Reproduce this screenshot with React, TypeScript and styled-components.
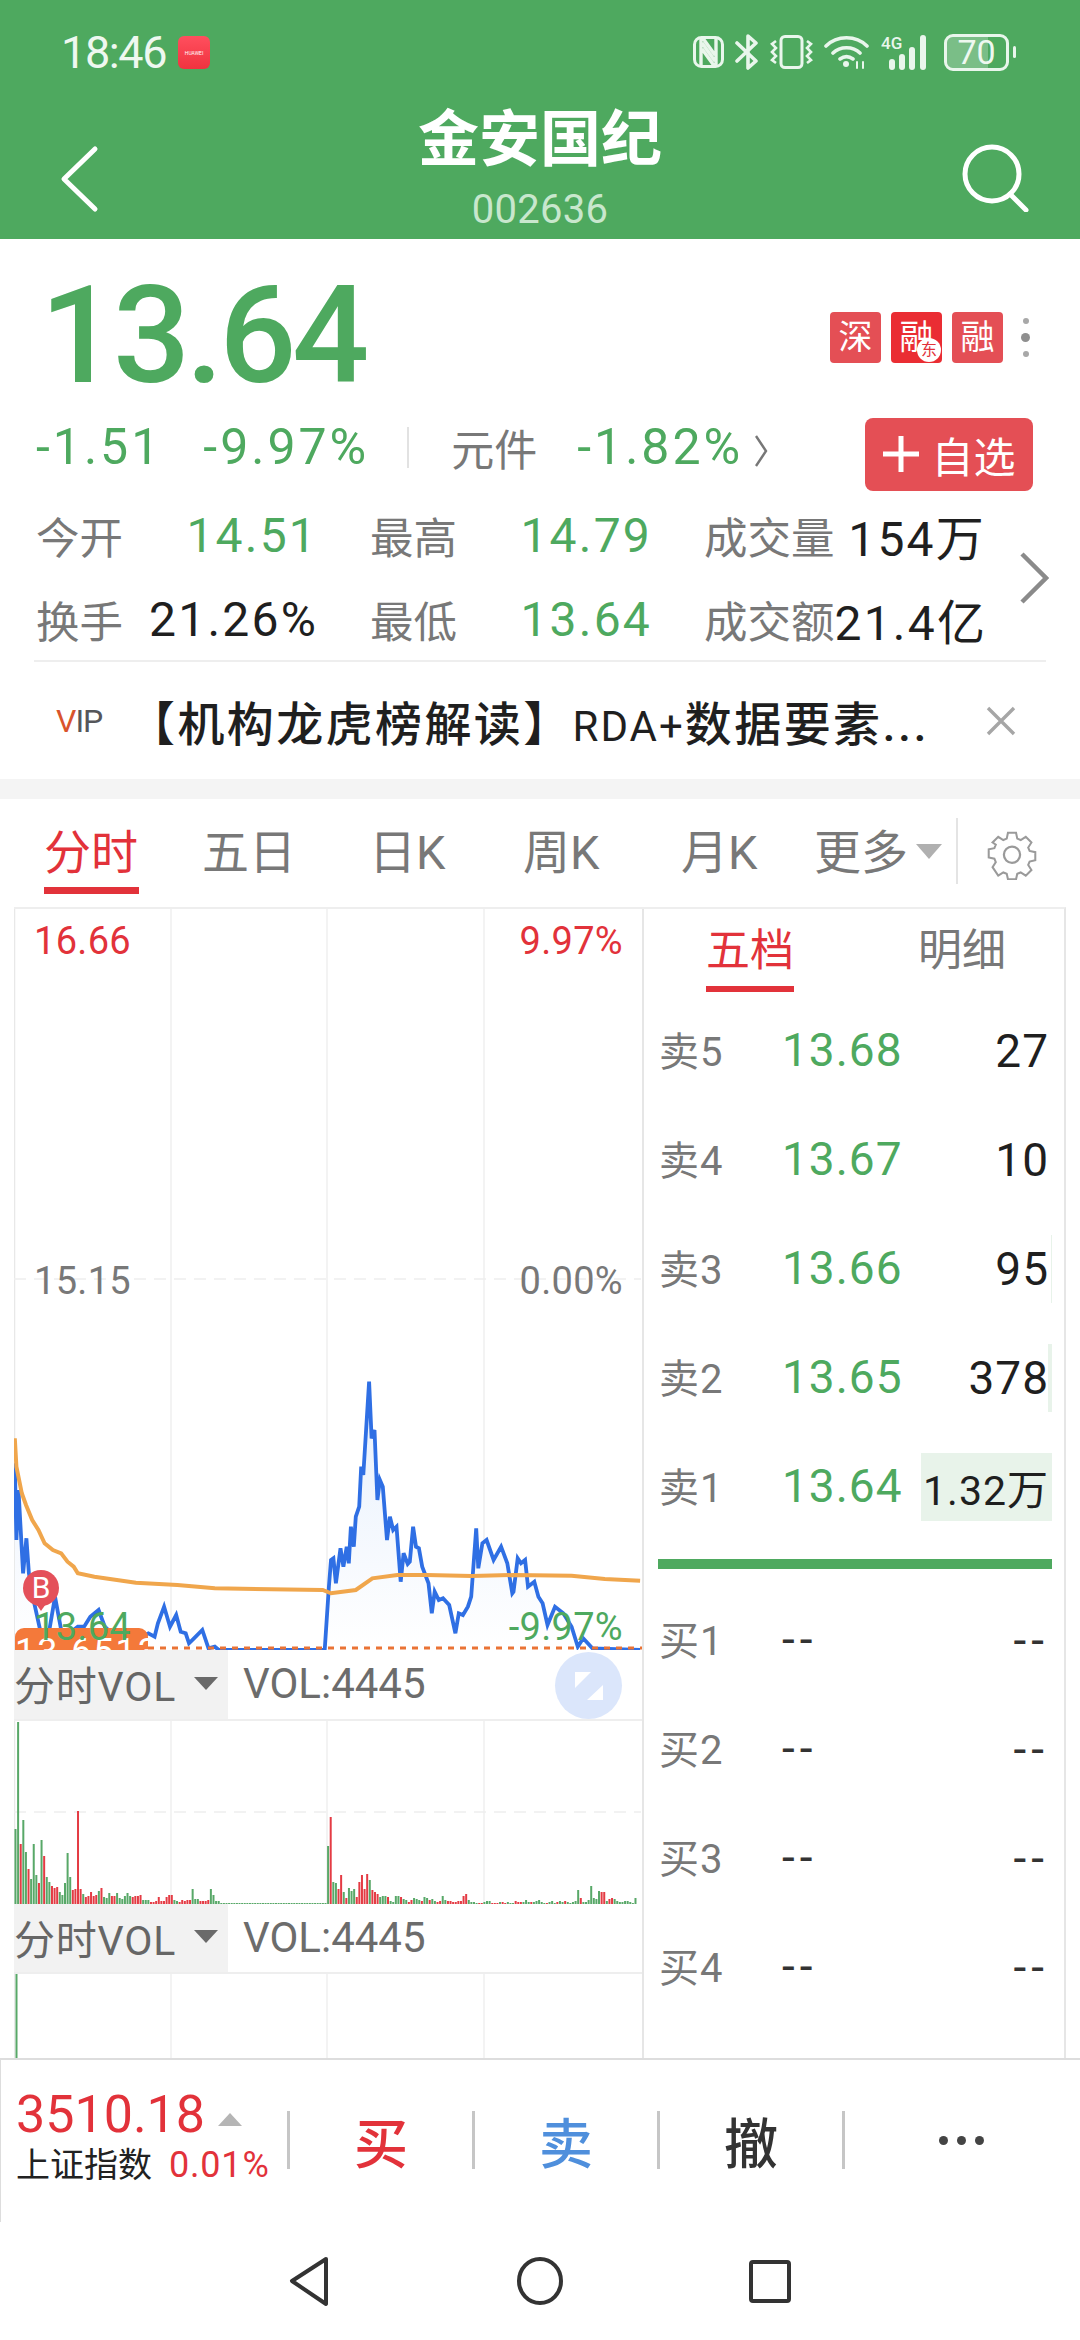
import React from "react"
import styled, { createGlobalStyle } from "styled-components"

const GREEN = "#4ea95f"
const RED = "#e2323a"
const GRAY = "#787878"
const INK = "#1f1f1f"
const CJK = `Roboto, "Noto Sans CJK SC", sans-serif`

const GlobalStyle = createGlobalStyle`
  html, body {
    margin: 0;
    padding: 0;
    background: #fff;
  }
  body {
    font-family: ${CJK};
  }
`

const Page = styled.div`
  width: 1080px;
  height: 2340px;
  display: flex;
  flex-direction: column;
  overflow: hidden;
  background: #fff;
`

/* ---------- green header ---------- */

const Header = styled.header`
  height: 239px;
  flex: none;
  background: ${GREEN};
  color: #fff;
  position: relative;
  display: flex;
  flex-direction: column;
`

const StatusBar = styled.div`
  height: 104px;
  display: flex;
  align-items: center;
  justify-content: space-between;
  padding: 0 64px 0 61px;
`

const StatusLeft = styled.div`
  display: flex;
  align-items: center;
  gap: 12px;
`

const Clock = styled.span`
  font-size: 45px;
  color: #eef8f0;
  letter-spacing: -1.4px;
`

const StoreIcon = styled.div`
  width: 32px;
  height: 33px;
  border-radius: 6px;
  background: linear-gradient(#ff4f5e, #f0333f);
  color: #fff;
  font-size: 5px;
  text-align: center;
  line-height: 34px;
  overflow: hidden;
`

const StatusRight = styled.div`
  display: flex;
  align-items: center;
  gap: 11px;
`

const Battery = styled.div`
  width: 65px;
  height: 37px;
  box-sizing: border-box;
  border: 3px solid #e9f6ec;
  border-radius: 9px;
  position: relative;
  overflow: hidden;
  display: flex;
  align-items: center;
  justify-content: center;
  font-size: 34px;
  color: #eef8f0;
  margin-left: 2px;

  &::before {
    content: "";
    position: absolute;
    left: 0;
    top: 0;
    bottom: 0;
    width: 70%;
    background: rgba(255, 255, 255, 0.25);
  }
`

const BatteryText = styled.span`
  position: relative;
`

const BatteryNub = styled.div`
  width: 3px;
  height: 12px;
  border-radius: 2px;
  background: #e9f6ec;
  margin-left: -7px;
`

const TitleBar = styled.div`
  flex: 1;
  display: flex;
  align-items: flex-start;
  justify-content: space-between;
  padding: 0 50px 0 60px;
`

const TitleBlock = styled.div`
  display: flex;
  flex-direction: column;
  align-items: center;
  margin: -3px 0 0 18px;
`

const Title = styled.h1`
  margin: 0;
  font-size: 61px;
  line-height: 78px;
  font-weight: 700;
`

const Code = styled.div`
  font-size: 40px;
  line-height: 44px;
  letter-spacing: 0.3px;
  color: #c8e7cd;
  margin-top: 9px;
`

const BackIcon = styled.svg`
  width: 40px;
  height: 68px;
  margin-top: 41px;
`

const SearchIcon = styled.svg`
  width: 68px;
  height: 68px;
  margin-top: 40px;
`

/* ---------- quote ---------- */

const PriceRow = styled.div`
  height: 170px;
  flex: none;
  display: flex;
  align-items: center;
  justify-content: space-between;
  padding: 24px 50px 0 40px;
  box-sizing: border-box;
`

const BigPrice = styled.div`
  font-size: 136px;
  font-weight: 500;
  line-height: 1;
  color: ${GREEN};
  letter-spacing: -4.4px;
`

const Badges = styled.div`
  display: flex;
  align-items: center;
  gap: 10px;
  margin-top: 2px;
`

const Badge = styled.div<{ $strong?: boolean }>`
  width: 51px;
  height: 51px;
  border-radius: 4px;
  background: ${(p) => (p.$strong ? "#ea2d33" : "#e44f55")};
  color: #fff;
  font-size: 34px;
  line-height: 50px;
  text-align: center;
  position: relative;
`

const BadgeDot = styled.span`
  position: absolute;
  right: 1px;
  bottom: 1px;
  width: 24px;
  height: 24px;
  border-radius: 50%;
  background: #fff;
  color: #e2323a;
  font-size: 16px;
  line-height: 24px;
`

const MoreDots = styled.div`
  display: flex;
  flex-direction: column;
  align-items: center;
  gap: 9px;
  margin-left: 8px;
`

const Dot = styled.span<{ $big?: boolean }>`
  width: ${(p) => (p.$big ? 9 : 6)}px;
  height: ${(p) => (p.$big ? 9 : 6)}px;
  border-radius: 50%;
  background: ${(p) => (p.$big ? "#8f8f8f" : "#a8a8a8")};
`

const ChangeRow = styled.div`
  height: 90px;
  flex: none;
  display: flex;
  align-items: center;
  padding: 0 47px 14px 36px;
  box-sizing: border-box;
`

const ChangeValue = styled.span<{ $gap?: number }>`
  font-size: 50px;
  letter-spacing: 3px;
  color: ${GREEN};
  margin-left: ${(p) => p.$gap ?? 0}px;
`

const VLine = styled.span`
  width: 2px;
  height: 41px;
  background: #e2e2e2;
  margin: 0 42px 0 38px;
`

const Sector = styled.span`
  font-size: 43px;
  color: ${GRAY};
`

const MiniChevron = styled.svg`
  width: 14px;
  height: 34px;
  margin: 8px 0 0 11px;
`

const AddButton = styled.button`
  width: 168px;
  height: 73px;
  margin-left: auto;
  margin-top: 14px;
  border: none;
  border-radius: 8px;
  background: #e44f55;
  color: #fff;
  font-family: ${CJK};
  font-size: 42px;
  padding: 0;
  display: flex;
  align-items: center;
  justify-content: center;
  gap: 11px;
`

const StatsRow = styled.div`
  height: 163px;
  flex: none;
  margin: 0 34px;
  border-bottom: 2px solid #eeeeee;
  box-sizing: border-box;
  display: flex;
  justify-content: space-between;
  padding: 0 0 0 2px;
`

const StatsGrid = styled.div`
  display: grid;
  grid-template-columns: repeat(3, 282px);
  grid-auto-rows: 84px;
  column-gap: 52px;
  margin-top: -6px;
`

const Stat = styled.div`
  display: flex;
  align-items: center;
  justify-content: space-between;
`

const StatLabel = styled.span`
  font-size: 43.5px;
  color: ${GRAY};
  white-space: nowrap;
  flex: none;
`

const StatValue = styled.span<{ $green?: boolean }>`
  font-size: 48px;
  letter-spacing: 2.2px;
  white-space: nowrap;
  color: ${(p) => (p.$green ? GREEN : INK)};
`

const BigChevron = styled.svg`
  width: 30px;
  height: 52px;
  margin: 53px -3px 0 0;
`

const Notice = styled.div`
  height: 117px;
  flex: none;
  display: flex;
  align-items: center;
  padding: 0 64px 0 56px;
  box-sizing: border-box;
`

const VipMark = styled.span`
  font-size: 32px;
  width: 72px;
  flex: none;
  color: #55565a;
  letter-spacing: -1px;
`

const VipV = styled.span`
  color: #d9542c;
`

const NoticeText = styled.span`
  font-size: 47px;
  font-weight: 500;
  letter-spacing: 2.4px;
  color: ${INK};
  white-space: nowrap;
`

const NoticeLatin = styled.span`
  font-size: 42px;
  font-weight: 400;
  letter-spacing: 2px;
`

const CloseIcon = styled.svg`
  width: 30px;
  height: 30px;
  margin-left: auto;
`

const Band = styled.div`
  height: 20px;
  flex: none;
  background: #f4f4f4;
`

/* ---------- period tabs ---------- */

const PeriodTabs = styled.nav`
  height: 108px;
  flex: none;
  position: relative;
  display: flex;
  align-items: center;
  padding-left: 44px;
  box-sizing: border-box;
`

const PeriodTab = styled.span<{ $active?: boolean; $w: number }>`
  width: ${(p) => p.$w}px;
  flex: none;
  height: 87px;
  box-sizing: border-box;
  display: flex;
  align-items: center;
  font-size: 47px;
  margin-top: -5px;
  padding-bottom: 5px;
  white-space: nowrap;
  color: ${(p) => (p.$active ? RED : GRAY)};
  position: relative;

  &::after {
    content: "";
    display: ${(p) => (p.$active ? "block" : "none")};
    position: absolute;
    left: 0;
    bottom: 0;
    width: 95px;
    height: 7px;
    background: ${RED};
  }
`

const Caret = styled.span`
  width: 0;
  height: 0;
  border-left: 13px solid transparent;
  border-right: 13px solid transparent;
  border-top: 15px solid #b0b0b0;
  margin: -4px 0 0 10px;
`

const TabDivider = styled.span`
  width: 2px;
  height: 66px;
  background: #e4e4e4;
  margin: -4px 0 0 14px;
`

const GearIcon = styled.svg`
  width: 54px;
  height: 54px;
  margin-left: 27px;
`

/* ---------- chart ---------- */

const ChartArea = styled.section`
  height: 1151px;
  flex: none;
  margin: 0 14px;
  border-top: 2px solid #eeeeee;
  border-right: 2px solid #e6e6e6;
  box-sizing: border-box;
  display: flex;
  min-height: 0;
`

const ChartColumn = styled.div`
  width: 628px;
  flex: none;
  border-right: 2px solid #e6e6e6;
  display: flex;
  flex-direction: column;
`

const Plot = styled.div<{ $h: number }>`
  height: ${(p) => p.$h}px;
  flex: none;
  position: relative;
`

const PlotSvg = styled.svg`
  display: block;
  position: absolute;
  left: 0;
  top: 0;
  width: 100%;
  height: 100%;
`

const AxisLabel = styled.span<{ $top: number; $right?: boolean; $color: string }>`
  position: absolute;
  top: ${(p) => p.$top}px;
  ${(p) => (p.$right ? "right: 19px;" : "left: 20px;")}
  font-size: 38px;
  line-height: 40px;
  letter-spacing: 0.3px;
  color: ${(p) => p.$color};
`

const TagBox = styled.div`
  position: absolute;
  left: 1px;
  bottom: 0;
  width: 133px;
  height: 22px;
  border-radius: 9px 9px 0 0;
  background: #f4793a;
  overflow: hidden;
  color: #fff;
  font-size: 36px;
  line-height: 48px;
  text-align: center;
  letter-spacing: 2px;
`

const BuyPin = styled.div`
  position: absolute;
  left: 9px;
  top: 661px;
  width: 36px;
  height: 36px;
  border-radius: 50%;
  background: #e4505a;
  color: #fff;
  font-size: 30px;
  line-height: 36px;
  text-align: center;

  &::after {
    content: "";
    position: absolute;
    left: 11px;
    top: 31px;
    border-left: 7px solid transparent;
    border-right: 7px solid transparent;
    border-top: 10px solid #e4505a;
  }
`

const PanelHead = styled.div<{ $h: number }>`
  height: ${(p) => p.$h}px;
  flex: none;
  position: relative;
  display: flex;
  align-items: center;
  border-bottom: 2px solid #eeeeee;
  box-sizing: border-box;
`

const PanelSelect = styled.div`
  width: 214px;
  height: 100%;
  background: #f2f2f2;
  display: flex;
  align-items: center;
  padding-bottom: 3px;
  box-sizing: border-box;
  font-size: 41px;
  letter-spacing: 0.8px;
  color: #666666;
  white-space: nowrap;
`

const PanelCaret = styled.span`
  border-left: 12px solid transparent;
  border-right: 12px solid transparent;
  border-top: 13px solid #6a6a6a;
  margin-left: 18px;
`

const PanelValue = styled.span`
  font-size: 42px;
  color: #6c6c6c;
  margin: -2px 0 0 15px;
`

const ZoomButton = styled.div`
  position: absolute;
  right: 20px;
  top: 2px;
  width: 67px;
  height: 67px;
  border-radius: 50%;
  background: #dbe6fb;
  display: flex;
  align-items: center;
  justify-content: center;
`

/* ---------- order book ---------- */

const Book = styled.div`
  flex: 1;
  display: flex;
  flex-direction: column;
  padding: 0 12px 0 14px;
`

const BookTabs = styled.div`
  height: 83px;
  flex: none;
  display: flex;
  font-size: 44px;
  margin-bottom: 4px;
`

const BookTab = styled.span<{ $active?: boolean; $w: number }>`
  width: ${(p) => p.$w}px;
  height: 83px;
  margin-left: ${(p) => (p.$active ? 48 : 124)}px;
  box-sizing: border-box;
  text-align: center;
  line-height: 84px;
  color: ${(p) => (p.$active ? RED : GRAY)};
  border-bottom: ${(p) => (p.$active ? `6px solid ${RED}` : "none")};
  white-space: nowrap;
`

const BookRow = styled.div`
  height: 109px;
  flex: none;
  display: flex;
  align-items: center;
  position: relative;
`

const BookLabel = styled.span`
  width: 125px;
  flex: none;
  margin: -4px 0 0 1px;
  font-size: 40px;
  color: ${GRAY};
  letter-spacing: 1px;
`

const BookPrice = styled.span<{ $dash?: boolean }>`
  font-size: 46px;
  margin: -2px 0 0 -2px;
  letter-spacing: ${(p) => (p.$dash ? 5 : 1)}px;
  color: ${(p) => (p.$dash ? "#333333" : GREEN)};
`

const BookVolume = styled.span<{ $bar: number; $dash?: boolean }>`
  margin-left: auto;
  height: 68px;
  width: ${(p) => (p.$bar > 100 ? p.$bar + "px" : "auto")};
  box-sizing: border-box;
  display: flex;
  align-items: center;
  justify-content: flex-end;
  padding-right: 3px;
  font-size: ${(p) => (p.$bar > 100 ? 41 : 46)}px;
  letter-spacing: ${(p) => (p.$dash ? 5 : 1)}px;
  color: ${(p) => (p.$dash ? "#333333" : INK)};
  white-space: nowrap;
  box-shadow: inset ${(p) => -p.$bar}px 0 0 #e8f3ea;
`

const MidBar = styled.div`
  height: 10px;
  flex: none;
  margin: 18px 0 16px;
  background: ${GREEN};
`

/* ---------- footer ---------- */

const Footer = styled.footer`
  height: 164px;
  flex: none;
  border-top: 2px solid #dddddd;
  border-left: 1px solid #dddddd;
  box-sizing: border-box;
  display: flex;
  align-items: flex-start;
  padding-top: 28px;
`

const IndexBlock = styled.div`
  width: 270px;
  flex: none;
  padding-left: 15px;
  box-sizing: border-box;
`

const IndexTop = styled.div`
  display: flex;
  align-items: center;
  font-size: 52px;
  line-height: 54px;
  color: ${RED};
`

const UpCaret = styled.span`
  border-left: 12px solid transparent;
  border-right: 12px solid transparent;
  border-bottom: 13px solid #b5b5b5;
  margin: 8px 0 0 13px;
`

const IndexBottom = styled.div`
  display: flex;
  align-items: center;
  margin-top: 5px;
  line-height: 36px;
  white-space: nowrap;
`

const IndexName = styled.span`
  font-size: 34px;
  color: #222222;
`

const IndexPct = styled.span`
  font-size: 36px;
  letter-spacing: 0.8px;
  color: ${RED};
  margin-left: 17px;
`

const Actions = styled.div`
  flex: 1;
  display: flex;
  margin-top: 23px;
  margin-left: 16px;
`

const Action = styled.div<{ $color: string }>`
  width: 185px;
  height: 58px;
  flex: none;
  border-left: 3px solid #c6c6c6;
  box-sizing: border-box;
  display: flex;
  align-items: center;
  justify-content: center;
  font-size: 54px;
  font-weight: 500;
  color: ${(p) => p.$color};
`

const ActionDots = styled.div`
  width: 236px;
  height: 58px;
  border-left: 3px solid #c6c6c6;
  box-sizing: border-box;
  display: flex;
  align-items: center;
  justify-content: center;
  gap: 9px;
`

const ActionDot = styled.span`
  width: 9px;
  height: 9px;
  border-radius: 50%;
  background: #444444;
`

/* ---------- system nav ---------- */

const SystemNav = styled.div`
  height: 118px;
  flex: none;
  display: flex;
  align-items: center;
  justify-content: center;
`

const NavIcon = styled.svg`
  width: 230px;
  height: 60px;
`

/* ---------- data ---------- */

const blue: number[][] = [
  [38, 370], [42, 600], [47, 450], [58, 700], [66, 595], [72, 700], [85, 790], [100, 875], [120, 880],
  [135, 770], [150, 870], [170, 880], [190, 860], [205, 860], [220, 830], [240, 810], [255, 860], [280, 890],
  [310, 900], [345, 890], [360, 880], [375, 890], [383, 850], [398, 800], [412, 860], [427, 825], [438, 875],
  [450, 880], [458, 910], [470, 895], [490, 870], [505, 925], [520, 920], [530, 930], [785, 930], [795, 740],
  [800, 660], [806, 655], [812, 730], [823, 625], [830, 680], [838, 620], [843, 670], [848, 560], [855, 620],
  [860, 530], [868, 500], [873, 380], [878, 405], [892, 125], [898, 295], [905, 270], [912, 480], [918, 420],
  [925, 440], [935, 600], [942, 530], [950, 570], [958, 560], [968, 725], [975, 640], [985, 672], [990, 665],
  [998, 560], [1005, 620], [1012, 625], [1020, 680], [1035, 730], [1043, 820], [1050, 755], [1060, 780],
  [1070, 775], [1085, 795], [1100, 880], [1108, 820], [1118, 825], [1130, 800], [1138, 770], [1150, 565],
  [1155, 685], [1165, 610], [1175, 600], [1192, 660], [1210, 620], [1225, 670], [1237, 760], [1240, 755],
  [1250, 655], [1258, 670], [1268, 660], [1275, 740], [1290, 725], [1300, 770], [1310, 790], [1322, 855],
  [1340, 800], [1360, 820], [1380, 860], [1395, 920], [1408, 895], [1430, 925], [1545, 930],
]

const orange: number[][] = [
  [38, 295], [42, 380], [55, 460], [65, 495], [80, 540], [95, 570], [110, 610], [130, 630], [150, 640],
  [165, 665], [180, 680], [190, 700], [230, 710], [330, 728], [430, 735], [520, 745], [780, 750], [800, 760],
  [860, 750], [900, 715], [960, 705], [1030, 705], [1140, 708], [1240, 705], [1380, 707], [1460, 717], [1545, 722],
]

// crop coordinates of the lines -> plot pixels
const toPlot = (p: number[]) => `${(p[0] / 2.41 - 15).toFixed(1)},${(p[1] / 3 + 431).toFixed(1)}`
const bluePts = blue.map(toPlot).join(" ")
const orangePts = orange.map(toPlot).join(" ")

// positive = green, negative = red
const volumes: number[] = [
  75, 182, -60, 84, 52, -35, 25, 60, 29, -21, 64, -48, 27, 22, -18, -16, -17, 12, 9, 21, 51, 27, -14, -15, -93,
  -15, 10, -7, -8, -12, -8, -9, 13, -16, 7, 6, 11, -8, -8, 11, 6, 5, 8, 11, 8, -7, -8, -8, -9, 4, 4, 4, -2, -2,
  -3, -7, -3, -3, -7, -9, -9, 4, 3, -2, -4, -3, -4, -4, 15, 5, 5, -3, -3, -3, -4, 15, 9, 3, 3, 1,
  ...Array.from({ length: 40 }, () => 1),
  58, -87, 22, 21, -15, -29, 12, -6, 16, 13, 15, -7, -22, -29, -15, -30, 24, -14, -12, -10, 7, 8, 8, -7, 3, 2, 8,
  8, -7, 5, 4, -2, -4, 6, 5, 4, -3, 7, 6, -4, 5, 3, -2, -3, 8, 4, -3, -3, -2, -2, -3, -3, -8, -10, 4, 2, 2, 1,
  -1, -1, 2, 3, 3, -1, -1, -1, 2, -2, -1, 2, 1, 1, -3, -2, -2, 2, 4, 2, -2, 2, 3, 4,
  2, 1, -1, 2, 3, 1, -2, 3, 2, -3, 2, 1, 2, 3,
  14, -6, 2, 2, 4, 18, 6, 5, 13, -12, -12, 3, -5, -6, 5, 3, 2, 2, 3, 3, 2, 1, 6,
]

const sells = [
  { label: "卖5", price: "13.68", vol: "27", bar: 0 },
  { label: "卖4", price: "13.67", vol: "10", bar: 0 },
  { label: "卖3", price: "13.66", vol: "95", bar: 1 },
  { label: "卖2", price: "13.65", vol: "378", bar: 4 },
  { label: "卖1", price: "13.64", vol: "1.32万", bar: 131 },
]

const buys = ["买1", "买2", "买3", "买4"]
const periods = [
  { t: "分时", w: 158, active: true },
  { t: "五日", w: 167 },
  { t: "日K", w: 154 },
  { t: "周K", w: 158 },
  { t: "月K", w: 133 },
]

const GridLines: React.FC<{ h: number; mid?: number }> = ({ h, mid }) => (
  <>
    <line x1="0.5" y1="0" x2="0.5" y2={h} stroke="#e8e8e8" strokeWidth="1.5" />
    {[157, 313, 470].map((x) => (
      <line key={x} x1={x} y1="0" x2={x} y2={h} stroke="#efefef" strokeWidth="1.5" />
    ))}
    {mid !== undefined && (
      <line x1="0" y1={mid} x2="627" y2={mid} stroke="#eeeeee" strokeWidth="1.5" strokeDasharray="12 8" />
    )}
  </>
)

const App: React.FC = () => {
  return (
    <Page>
      <GlobalStyle />
      <Header>
        <StatusBar>
          <StatusLeft>
            <Clock>18:46</Clock>
            <StoreIcon>HUAWEI</StoreIcon>
          </StatusLeft>
          <StatusRight>
            <svg width="31" height="32" viewBox="0 0 31 32" fill="none">
              <rect x="1.5" y="1.5" width="28" height="29" rx="7" stroke="#e9f6ec" strokeWidth="3" />
              <path d="M8 3v26M23 3v26M9 7l13 18M9 13l13 18M9 1l13 18" stroke="#e9f6ec" strokeWidth="3.4" />
            </svg>
            <svg width="24" height="36" viewBox="0 0 24 36" fill="none">
              <path d="M2 9l19 18-8 7V2l8 7L2 27" stroke="#e9f6ec" strokeWidth="3.6" strokeLinejoin="round" strokeLinecap="round" />
            </svg>
            <svg width="43" height="34" viewBox="0 0 43 34" fill="none" stroke="#e9f6ec" strokeWidth="2.6">
              <rect x="11" y="1.5" width="21" height="31" rx="4" strokeWidth="3" />
              <path d="M6 6l-4 3 4 4-4 4 4 4-4 4 4 3M37 6l4 3-4 4 4 4-4 4 4 4-4 3" />
            </svg>
            <svg width="46" height="34" viewBox="0 0 46 34" fill="none" stroke="#e9f6ec" strokeWidth="3.6" strokeLinecap="round">
              <path d="M2 11C13 0 32 0 43 11M9 18c7-7 20-7 27 0M16 24c4-3 9-3 13 0" />
              <circle cx="22" cy="29" r="3" fill="#e9f6ec" stroke="none" />
              <path d="M33 33V27M39 27v6" strokeWidth="2" />
            </svg>
            <svg width="50" height="36" viewBox="0 0 50 36">
              <text x="0" y="15" fontSize="17" fontWeight="500" fill="#e9f6ec" fontFamily="Roboto">4G</text>
              <g fill="#e9f6ec">
                <rect x="8" y="25" width="6" height="11" rx="3" />
                <rect x="18" y="20" width="6" height="16" rx="3" />
                <rect x="28" y="13" width="6" height="23" rx="3" />
                <rect x="39" y="1" width="6" height="35" rx="3" />
              </g>
            </svg>
            <Battery>
              <BatteryText>70</BatteryText>
            </Battery>
            <BatteryNub />
          </StatusRight>
        </StatusBar>
        <TitleBar>
          <BackIcon viewBox="0 0 40 68" fill="none" stroke="#fff" strokeWidth="5" strokeLinecap="round" strokeLinejoin="round">
            <path d="M35 4L4 34l31 30" />
          </BackIcon>
          <TitleBlock>
            <Title>金安国纪</Title>
            <Code>002636</Code>
          </TitleBlock>
          <SearchIcon viewBox="0 0 68 68" fill="none" stroke="#fff" strokeWidth="5" strokeLinecap="round">
            <circle cx="30" cy="30" r="27" />
            <path d="M48 50l16 16" />
          </SearchIcon>
        </TitleBar>
      </Header>

      <PriceRow>
        <BigPrice>13.64</BigPrice>
        <Badges>
          <Badge>深</Badge>
          <Badge $strong>
            融<BadgeDot>东</BadgeDot>
          </Badge>
          <Badge>融</Badge>
          <MoreDots>
            <Dot />
            <Dot $big />
            <Dot />
          </MoreDots>
        </Badges>
      </PriceRow>

      <ChangeRow>
        <ChangeValue>-1.51</ChangeValue>
        <ChangeValue $gap={41}>-9.97%</ChangeValue>
        <VLine />
        <Sector>元件</Sector>
        <ChangeValue $gap={40}>-1.82%</ChangeValue>
        <MiniChevron viewBox="0 0 14 34" fill="none" stroke="#777" strokeWidth="2.4">
          <path d="M2 2l10 15L2 32" />
        </MiniChevron>
        <AddButton>
          <svg width="38" height="38" viewBox="0 0 38 38" stroke="#fff" strokeWidth="5">
            <path d="M19 1v36M1 19h36" />
          </svg>
          自选
        </AddButton>
      </ChangeRow>

      <StatsRow>
        <StatsGrid>
          <Stat>
            <StatLabel>今开</StatLabel>
            <StatValue $green>14.51</StatValue>
          </Stat>
          <Stat>
            <StatLabel>最高</StatLabel>
            <StatValue $green>14.79</StatValue>
          </Stat>
          <Stat>
            <StatLabel>成交量</StatLabel>
            <StatValue>154万</StatValue>
          </Stat>
          <Stat>
            <StatLabel>换手</StatLabel>
            <StatValue>21.26%</StatValue>
          </Stat>
          <Stat>
            <StatLabel>最低</StatLabel>
            <StatValue $green>13.64</StatValue>
          </Stat>
          <Stat>
            <StatLabel>成交额</StatLabel>
            <StatValue>21.4亿</StatValue>
          </Stat>
        </StatsGrid>
        <BigChevron viewBox="0 0 30 52" fill="none" stroke="#8a8a8a" strokeWidth="4.5">
          <path d="M3 2l24 24L3 50" />
        </BigChevron>
      </StatsRow>

      <Notice>
        <VipMark>
          <VipV>V</VipV>IP
        </VipMark>
        <NoticeText>
          【机构龙虎榜解读】<NoticeLatin>RDA+</NoticeLatin>数据要素...
        </NoticeText>
        <CloseIcon viewBox="0 0 30 30" stroke="#a6a6a6" strokeWidth="3.4">
          <path d="M2 2l26 26M28 2L2 28" />
        </CloseIcon>
      </Notice>

      <Band />

      <PeriodTabs>
        {periods.map((p) => (
          <PeriodTab key={p.t} $w={p.w} $active={p.active}>
            {p.t}
          </PeriodTab>
        ))}
        <PeriodTab $w={92}>更多</PeriodTab>
        <Caret />
        <TabDivider />
        <GearIcon viewBox="0 0 24 24" fill="none" stroke="#9a9a9a" strokeWidth="1">
          <path d="M10 2h4l.6 2.9 1.7.7L18.8 4l2.8 2.8-1.6 2.5.7 1.7 2.8.6v4l-2.8.6-.7 1.7 1.6 2.5-2.8 2.8-2.5-1.6-1.7.7-.6 2.7h-4l-.6-2.7-1.7-.7-2.5 1.6L2.4 19l1.6-2.5-.7-1.7-2.8-.6v-4l2.8-.6.7-1.7L2.4 6.8 5.2 4l2.5 1.6 1.7-.7z" transform="translate(1.2 1.2) scale(.9)" />
          <circle cx="12" cy="12.8" r="3.6" />
        </GearIcon>
      </PeriodTabs>

      <ChartArea>
        <ChartColumn>
          <Plot $h={741}>
            <PlotSvg viewBox="0 0 628 741">
              <defs>
                <linearGradient id="area" x1="0" y1="0" x2="0" y2="1">
                  <stop offset="0" stopColor="#e6effc" />
                  <stop offset="1" stopColor="#ffffff" />
                </linearGradient>
              </defs>
              <GridLines h={741} mid={370} />
              <polygon points={`${bluePts} 628,741 1,741`} fill="url(#area)" />
              <polyline points={bluePts} fill="none" stroke="#2f6fe4" strokeWidth="3.8" />
              <polyline points={orangePts} fill="none" stroke="#f0a64c" strokeWidth="4" />
              <line x1="134" y1="739" x2="628" y2="739" stroke="#ea7335" strokeWidth="3" strokeDasharray="6 6" />
            </PlotSvg>
            <AxisLabel $top={12} $color={RED}>16.66</AxisLabel>
            <AxisLabel $top={12} $right $color={RED}>9.97%</AxisLabel>
            <AxisLabel $top={352} $color={GRAY}>15.15</AxisLabel>
            <AxisLabel $top={352} $right $color={GRAY}>0.00%</AxisLabel>
            <TagBox>13.6513</TagBox>
            <AxisLabel $top={698} $color={GREEN}>13.64</AxisLabel>
            <AxisLabel $top={698} $right $color={GREEN}>-9.97%</AxisLabel>
            <BuyPin>B</BuyPin>
          </Plot>
          <PanelHead $h={71}>
            <PanelSelect>
              分时VOL
              <PanelCaret />
            </PanelSelect>
            <PanelValue>VOL:4445</PanelValue>
            <ZoomButton>
              <svg width="34" height="34" viewBox="0 0 34 34" fill="#fff">
                <path d="M3 3h16L3 19zM31 16v15H15z" />
              </svg>
            </ZoomButton>
          </PanelHead>
          <Plot $h={183}>
            <PlotSvg viewBox="0 0 628 183">
              <GridLines h={183} mid={91} />
              {volumes.map((v, i) => {
                const h = Math.abs(v)
                return (
                  <rect
                    key={i}
                    x={0.5 + i * 2.605}
                    y={183 - h}
                    width="2"
                    height={h}
                    fill={v < 0 ? "#e43b44" : "#58a868"}
                  />
                )
              })}
            </PlotSvg>
          </Plot>
          <PanelHead $h={70}>
            <PanelSelect>
              分时VOL
              <PanelCaret />
            </PanelSelect>
            <PanelValue>VOL:4445</PanelValue>
          </PanelHead>
          <Plot $h={84}>
            <PlotSvg viewBox="0 0 628 84">
              <GridLines h={84} />
              <rect x="1.5" y="0" width="2" height="84" fill="#58a868" />
            </PlotSvg>
          </Plot>
        </ChartColumn>

        <Book>
          <BookTabs>
            <BookTab $active $w={88}>五档</BookTab>
            <BookTab $w={88}>明细</BookTab>
          </BookTabs>
          {sells.map((s) => (
            <BookRow key={s.label}>
              <BookLabel>{s.label}</BookLabel>
              <BookPrice>{s.price}</BookPrice>
              <BookVolume $bar={s.bar}>{s.vol}</BookVolume>
            </BookRow>
          ))}
          <MidBar />
          {buys.map((b) => (
            <BookRow key={b}>
              <BookLabel>{b}</BookLabel>
              <BookPrice $dash>--</BookPrice>
              <BookVolume $bar={0} $dash>--</BookVolume>
            </BookRow>
          ))}
        </Book>
      </ChartArea>

      <Footer>
        <IndexBlock>
          <IndexTop>
            3510.18
            <UpCaret />
          </IndexTop>
          <IndexBottom>
            <IndexName>上证指数</IndexName>
            <IndexPct>0.01%</IndexPct>
          </IndexBottom>
        </IndexBlock>
        <Actions>
          <Action $color={RED}>买</Action>
          <Action $color="#4f8fdc">卖</Action>
          <Action $color="#333333">撤</Action>
          <ActionDots>
            <ActionDot />
            <ActionDot />
            <ActionDot />
          </ActionDots>
        </Actions>
      </Footer>

      <SystemNav>
        <NavIcon viewBox="0 0 230 60" fill="none" stroke="#333" strokeWidth="4" strokeLinejoin="round">
          <path d="M131 8L97 30l34 23z" />
        </NavIcon>
        <NavIcon viewBox="0 0 230 60" fill="none" stroke="#333" strokeWidth="4">
          <ellipse cx="115" cy="30" rx="21" ry="22" />
        </NavIcon>
        <NavIcon viewBox="0 0 230 60" fill="none" stroke="#333" strokeWidth="4">
          <rect x="96" y="11" width="38" height="39" rx="2" />
        </NavIcon>
      </SystemNav>
    </Page>
  )
}

export default App
